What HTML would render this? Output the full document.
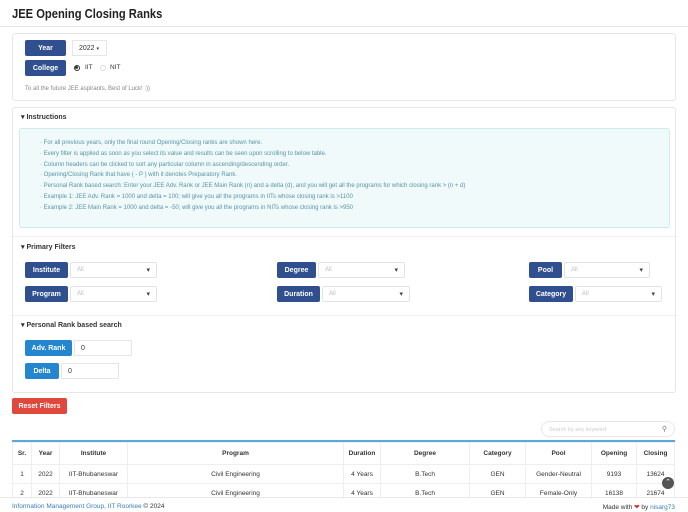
<!DOCTYPE html>
<html><head><meta charset="utf-8"><style>
*{box-sizing:border-box;margin:0;padding:0}
body{width:688px;height:512px;overflow:hidden;background:#fff;font-family:"Liberation Sans",sans-serif;color:#333;position:relative}
.a{position:absolute}
.btn{position:absolute;background:#2f4f8f;color:#fff;font-size:7px;font-weight:bold;display:flex;align-items:center;justify-content:center;border-radius:2px}
.bb{background:#2586d0}
.sel{position:absolute;border:1px solid #e3e3e3;border-radius:2px;font-size:6px;color:#bbb;padding-left:6px;display:flex;align-items:center;background:#fff}
.sel:after{content:"▾";position:absolute;right:6px;color:#444;font-size:7px}
.inp{position:absolute;border:1px solid #e5e5e5;font-size:7px;color:#333;padding-left:6px;display:flex;align-items:center}
.h{position:absolute;font-size:7px;font-weight:bold;color:#333}
.ins{font-size:6px;color:#5a93a6;line-height:10.8px}
table{border-collapse:collapse;font-size:6.5px}
td,th{border:1px solid #eee;text-align:center;height:19px}
th{font-weight:bold;color:#333;height:22px}
</style></head><body>
<div class="a" style="left:12px;top:6px;font-size:13px;font-weight:bold;color:#222;transform:scaleX(0.86);transform-origin:0 0;white-space:nowrap">JEE Opening Closing Ranks</div>
<div class="a" style="left:0;top:26px;width:688px;border-top:1px solid #e8e8e8"></div>

<div class="a" style="left:12px;top:33px;width:664px;height:68px;border:1px solid #e6e6e6;border-radius:3px"></div>
<div class="btn" style="left:25px;top:40px;width:41px;height:16px">Year</div>
<div class="a" style="left:72px;top:40px;width:35px;height:16px;border:1px solid #e6e6e6;font-size:7px;padding:4px 0 0 6px">2022 <span style="font-size:5px">▾</span></div>
<div class="btn" style="left:25px;top:60px;width:41px;height:16px">College</div>
<div class="a" style="left:74px;top:65px;width:6px;height:6px;border-radius:50%;border:1.5px solid #333;background:#fff"><div style="width:3px;height:3px;background:#333;border-radius:50%"></div></div>
<div class="a" style="left:85px;top:64px;font-size:6.5px">IIT</div>
<div class="a" style="left:100px;top:65px;width:6px;height:6px;border-radius:50%;border:1px solid #ddd"></div>
<div class="a" style="left:110px;top:64px;font-size:6.5px">NIT</div>
<div class="a" style="left:25px;top:86px;font-size:6px;color:#888">To all the future JEE aspirants, Best of Luck! :))</div>

<div class="a" style="left:12px;top:107px;width:664px;height:286px;border:1px solid #e6e6e6;border-radius:3px"></div>
<div class="h" style="left:21px;top:113px">▾ Instructions</div>
<div class="a" style="left:19px;top:128px;width:651px;height:100px;background:#f0fafb;border:1px solid #cfecef;border-radius:3px;padding:9px 0 0 20px">
<div class="ins">
· For all previous years, only the final round Opening/Closing ranks are shown here.<br>
· Every filter is applied as soon as you select its value and results can be seen upon scrolling to below table.<br>
· Column headers can be clicked to sort any particular column in ascending/descending order.<br>
· Opening/Closing Rank that have ( - P ) with it denotes Preparatory Rank.<br>
· Personal Rank based search: Enter your JEE Adv. Rank or JEE Main Rank (n) and a delta (d), and you will get all the programs for which closing rank &gt; (n + d)<br>
· Example 1: JEE Adv. Rank = 1000 and delta = 100; will give you all the programs in IITs whose closing rank is &gt;1100<br>
· Example 2: JEE Main Rank = 1000 and delta = -50; will give you all the programs in NITs whose closing rank is &gt;950</div></div>
<div class="a" style="left:13px;top:236px;width:662px;border-top:1px solid #eee"></div>
<div class="h" style="left:21px;top:243px">▾ Primary Filters</div>
<div class="btn" style="left:25px;top:262px;width:43px;height:16px">Institute</div>
<div class="sel" style="left:70px;top:262px;width:87px;height:16px">All</div>
<div class="btn" style="left:277px;top:262px;width:39px;height:16px">Degree</div>
<div class="sel" style="left:318px;top:262px;width:87px;height:16px">All</div>
<div class="btn" style="left:529px;top:262px;width:33px;height:16px">Pool</div>
<div class="sel" style="left:564px;top:262px;width:86px;height:16px">All</div>
<div class="btn" style="left:25px;top:286px;width:43px;height:16px">Program</div>
<div class="sel" style="left:70px;top:286px;width:87px;height:16px">All</div>
<div class="btn" style="left:277px;top:286px;width:43px;height:16px">Duration</div>
<div class="sel" style="left:322px;top:286px;width:88px;height:16px">All</div>
<div class="btn" style="left:529px;top:286px;width:44px;height:16px">Category</div>
<div class="sel" style="left:575px;top:286px;width:87px;height:16px">All</div>
<div class="a" style="left:13px;top:315px;width:662px;border-top:1px solid #eee"></div>
<div class="h" style="left:21px;top:321px">▾ Personal Rank based search</div>
<div class="btn bb" style="left:25px;top:340px;width:47px;height:16px">Adv. Rank</div>
<div class="inp" style="left:74px;top:340px;width:58px;height:16px">0</div>
<div class="btn bb" style="left:25px;top:363px;width:34px;height:16px">Delta</div>
<div class="inp" style="left:61px;top:363px;width:58px;height:16px">0</div>

<div class="btn" style="left:12px;top:398px;width:55px;height:16px;background:#e0483e">Reset Filters</div>

<div class="a" style="left:541px;top:421px;width:134px;height:16px;border:1px solid #e6e6e6;border-radius:8px;font-size:5.5px;color:#ccc;padding:5px 0 0 7px">Search by any keyword<span style="position:absolute;right:7px;top:3px;color:#777;font-size:7px">⚲</span></div>

<div class="a" style="left:12px;top:440px;width:663px;border-top:2px solid #5ba7e0"></div>
<table class="a" style="left:12px;top:442px;width:663px">
<tr><th style="width:19px">Sr.</th><th style="width:28px">Year</th><th style="width:68px">Institute</th><th style="width:216px">Program</th><th style="width:37px">Duration</th><th style="width:89px">Degree</th><th style="width:56px">Category</th><th style="width:66px">Pool</th><th style="width:45px">Opening</th><th>Closing</th></tr>
<tr><td>1</td><td>2022</td><td>IIT-Bhubaneswar</td><td>Civil Engineering</td><td>4 Years</td><td>B.Tech</td><td>GEN</td><td>Gender-Neutral</td><td>9193</td><td>13624</td></tr>
<tr><td>2</td><td>2022</td><td>IIT-Bhubaneswar</td><td>Civil Engineering</td><td>4 Years</td><td>B.Tech</td><td>GEN</td><td>Female-Only</td><td>16138</td><td>21674</td></tr>
</table>
<div class="a" style="left:662px;top:477px;width:12px;height:12px;border-radius:50%;background:#555;color:#fff;font-size:7px;text-align:center;line-height:12px">⌃</div>
<div class="a" style="left:0;top:497px;width:688px;height:15px;background:#fff;border-top:1px solid #e8e8e8"></div>
<div class="a" style="left:12px;top:503px;font-size:6.5px;color:#3a7dbf">Information Management Group, IIT Roorkee <span style="color:#333">© 2024</span></div>
<div class="a" style="right:13px;top:503px;font-size:6.5px;color:#333">Made with <span style="color:#d33">❤</span> by <span style="color:#3a7dbf">nisarg73</span></div>
</body></html>
